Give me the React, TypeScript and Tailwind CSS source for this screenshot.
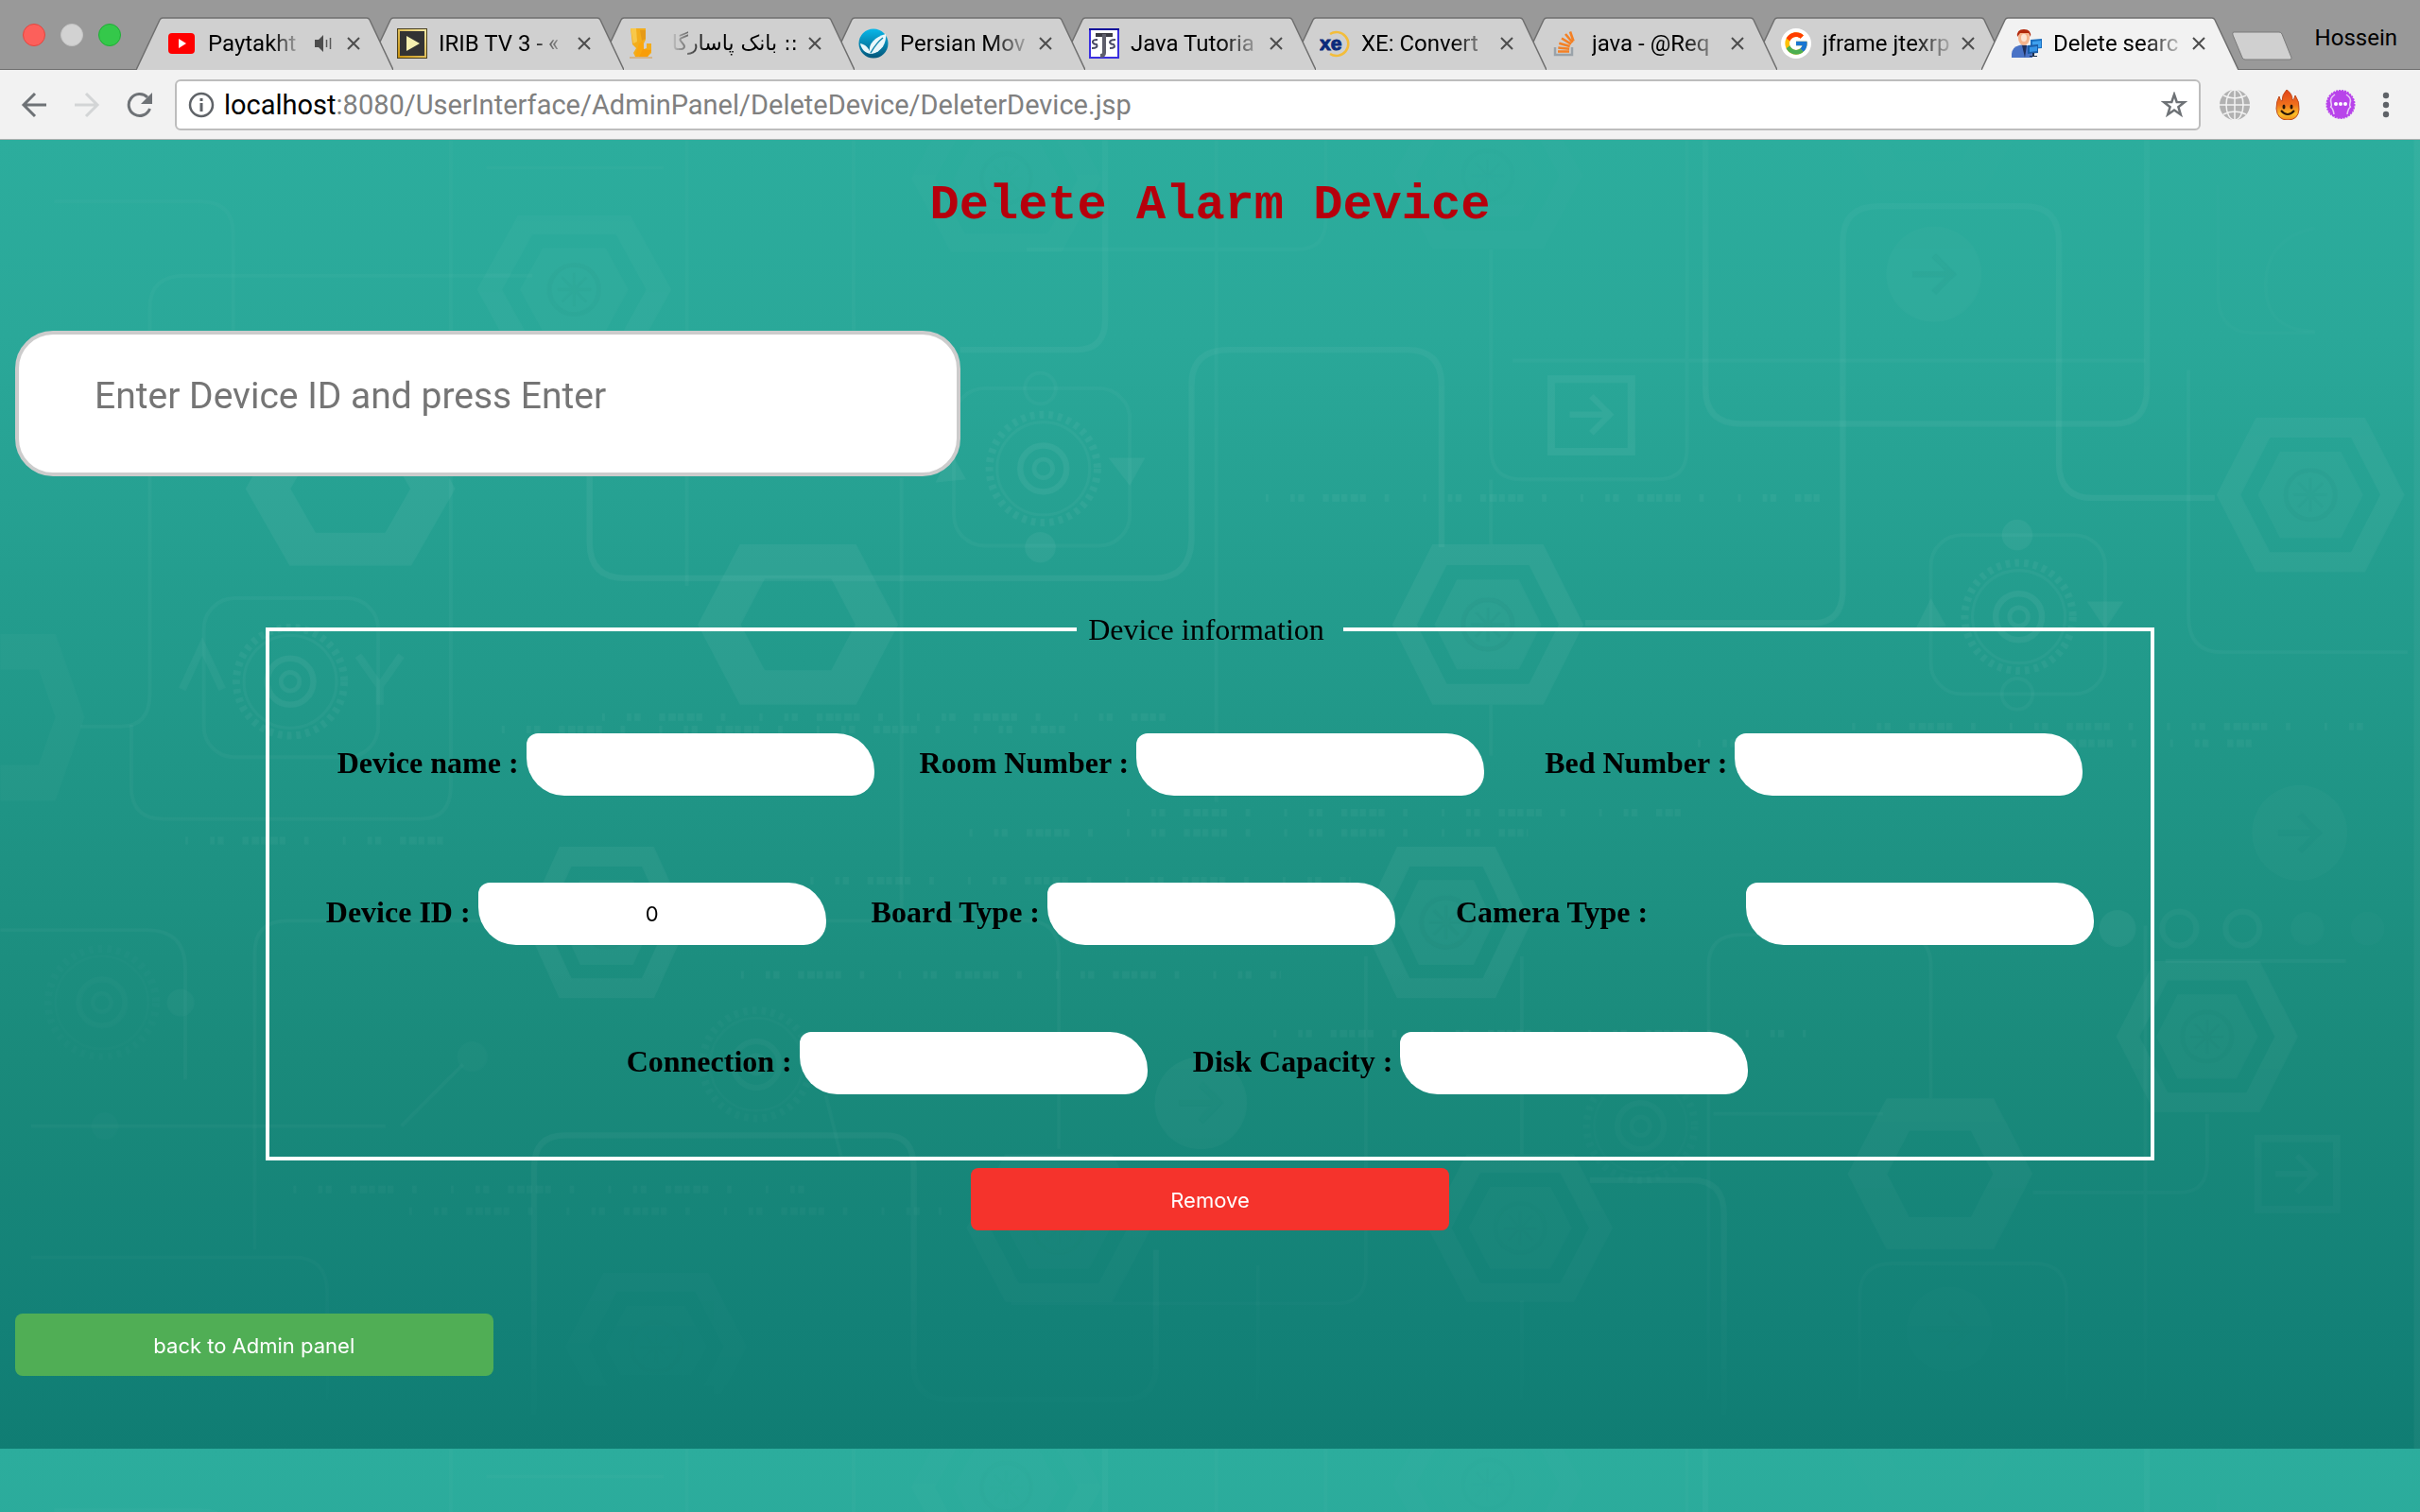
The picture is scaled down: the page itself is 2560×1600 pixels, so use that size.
import React from "react";
import { FcGoogle } from "react-icons/fc";

const ui = "font-[Roboto,'Liberation_Sans',sans-serif]";

/* ---------- Favicons ---------- */

const YouTubeIcon = () => (
  <svg viewBox="0 0 32 32" className="size-8">
    <rect x="2" y="5" width="28" height="22" rx="4" fill="#ff0000" />
    <path d="M13 11l8 5-8 5z" fill="#fff" />
  </svg>
);

const PlayIcon = () => (
  <svg viewBox="0 0 32 32" className="size-8">
    <defs>
      <linearGradient id="gold" x1="0" y1="1" x2="1" y2="0">
        <stop offset="0" stopColor="#c9920c" />
        <stop offset="1" stopColor="#f3e9a6" />
      </linearGradient>
    </defs>
    <rect x="0" y="0" width="32" height="32" fill="#4a4020" />
    <rect x="1" y="1" width="30" height="30" fill="url(#gold)" />
    <rect x="3" y="3" width="26" height="26" fill="#333" />
    <path d="M10 8l14 8-14 8z" fill="#f5efb0" />
  </svg>
);

const BankIcon = () => (
  <svg viewBox="0 0 32 32" className="size-8">
    <path d="M3 0h16v12l-2 4v6l3-1v-5l5 0v10l-4 4H8l-2-4 3-5-4-4z" fill="#f3ad1c" />
    <path d="M3 0h6l1 14-4 2z" fill="#f8c84a" />
    <path d="M12 16l4-3 1 9-6 8H8z" fill="#fba60c" />
    <path d="M16 22l9 1-4 7-9 0z" fill="#f99d07" />
    <path d="M2 30h24v2H2z" fill="#d3b58c" />
    <path d="M13 2h6v9l-4 2z" fill="#e59a18" />
  </svg>
);

const LeafIcon = () => (
  <svg viewBox="0 0 32 32" className="size-8">
    <defs>
      <linearGradient id="leafball" x1="0" y1="0" x2="0" y2="1">
        <stop offset="0" stopColor="#08b8ea" />
        <stop offset="1" stopColor="#04567a" />
      </linearGradient>
    </defs>
    <circle cx="16" cy="16" r="15.500" fill="url(#leafball)" />
    <path d="M12 26C10 16 18 9 29 6c1 9-4 19-15 21z" fill="#e9f7fb" />
    <path d="M2 16c5 1 9 4 11 11C7 26 3 22 2 16z" fill="#e9f7fb" />
    <path d="M13 26c4-7 8-12 13-16" stroke="#1487ad" strokeWidth="1.500" fill="none" />
  </svg>
);

const JavaTutorialIcon = () => (
  <svg viewBox="0 0 32 32" className="size-8">
    <rect x="1" y="1" width="30" height="30" fill="#fff" stroke="#3a2fe0" strokeWidth="2" />
    <path d="M0 1h32" stroke="#0a0a99" strokeWidth="2" />
    <path d="M7 5h18v4H7z" fill="#3b3b44" />
    <path d="M16 6v20q0 3-4 3" stroke="#5f5f6c" strokeWidth="4" fill="none" />
    <path d="M9 12q-6 0-5 3 1 2 4 2 2 4-5 4M28 12q-6 0-6 3 1 2 4 2 3 4-4 4" stroke="#4b4b66" strokeWidth="2" fill="none" />
  </svg>
);

const XeIcon = () => (
  <svg viewBox="0 0 32 32" className="size-8">
    <path d="M11 6a12.500 12.500 0 1 1 0 21" fill="none" stroke="#f3bd3a" strokeWidth="2.500" />
    <text x="0" y="23" fontFamily="Liberation Sans" fontWeight="700" fontSize="21" fill="#0b2a7a" stroke="#0b2a7a">
      xe
    </text>
  </svg>
);

const StackIcon = () => (
  <svg viewBox="0 0 32 32" className="size-8">
    <path d="M5 20v8h18v-8" fill="none" stroke="#9aa2a9" strokeWidth="2.500" />
    <path
      d="M8 24.500h12M8.300 20.500l11.800 1.200M9.300 15.800l11.400 3.200M12 10.500l10 6.200M16 6l7.500 9M21 3.500l3.500 10"
      stroke="#f48024"
      strokeWidth="2.600"
    />
  </svg>
);

const GoogleIcon = () => (
  <span className="flex size-8 items-center justify-center rounded-full bg-white">
    <FcGoogle className="size-7" />
  </span>
);

const PersonIcon = () => (
  <svg viewBox="0 0 32 32" className="size-8">
    <path d="M0 31q-1-11 8-13l5-1 6 2q3 2 3 12z" fill="#4a73c6" />
    <path d="M11 18h5l-2 13z" fill="#20305c" />
    <ellipse cx="13" cy="10" rx="6" ry="8" fill="#f6b48c" />
    <ellipse cx="13" cy="10" rx="3" ry="4" fill="#fde3d2" />
    <path d="M6 9q-1-8 7-8 8 0 7 8l-2-4H9z" fill="#b3290c" />
    <path d="M20 12l12-1v10l-12 1z" fill="#1b6fc0" />
    <path d="M22 14l9-1v7l-9 1z" fill="#3da0ee" />
    <path d="M17 18l11-1v9l-11 1z" fill="#1b5da8" />
    <path d="M19 20l8-1v5l-8 1z" fill="#3594e6" />
    <path d="M22 26v3h-3v1h8v-1h-3v-3z" fill="#1c2f4c" />
  </svg>
);

/* ---------- Browser chrome ---------- */

type TabData = {
  title: string;
  icon: React.ReactNode;
  rtl?: boolean;
  audio?: boolean;
  active?: boolean;
};

const tabs: TabData[] = [
  { title: "Paytakht", icon: <YouTubeIcon />, audio: true },
  { title: "IRIB TV 3 - «", icon: <PlayIcon /> },
  { title: ":: بانک پاسارگا", icon: <BankIcon />, rtl: true },
  { title: "Persian Mov", icon: <LeafIcon /> },
  { title: "Java Tutoria", icon: <JavaTutorialIcon /> },
  { title: "XE: Convert", icon: <XeIcon /> },
  { title: "java - @Req", icon: <StackIcon /> },
  { title: "jframe jtexrp", icon: <GoogleIcon /> },
  { title: "Delete searc", icon: <PersonIcon />, active: true },
];

function Tab({ tab, order }: { tab: TabData; order: number }) {
  return (
    <div className="relative -mr-7 h-14 w-[272px] min-w-0" style={{ zIndex: tab.active ? 20 : order }}>
      <svg viewBox="0 0 272 56" preserveAspectRatio="none" className="absolute inset-0 size-full" aria-hidden="true">
        <path d="M0 56L25 3Q26 1 28 1H244Q246 1 247 3L272 56z" fill={tab.active ? "#f2f2f2" : "#d0d0d0"} />
        <path d="M0 56L25 3Q26 1 28 1H244Q246 1 247 3L272 56" fill="none" stroke="#6f6f6f" strokeWidth="1.500" />
      </svg>
      <div className="relative flex h-full items-center pl-8 pr-[35px]">
        <span className="shrink-0">{tab.icon}</span>
        <span
          dir={tab.rtl ? "rtl" : "ltr"}
          className={
            "ml-3 min-w-0 flex-1 whitespace-nowrap text-2xl leading-9 text-black " +
            (tab.rtl
              ? "font-['DejaVu_Sans',sans-serif] text-[22px] [mask-image:linear-gradient(to_left,black_70%,transparent)]"
              : "[mask-image:linear-gradient(to_right,black_70%,transparent_105%)]")
          }
        >
          {tab.title}
        </span>
        {tab.audio && (
          <svg viewBox="0 0 20 20" className="ml-4 mr-1 size-5 shrink-0" aria-hidden="true">
            <path d="M1 6h4l5-5v18l-5-5H1z" fill="#4d4d4d" />
            <path d="M13.500 6v8M17.500 4v12" stroke="#5a5a5a" strokeWidth="1.500" />
          </svg>
        )}
        <button aria-label="Close tab" className="ml-[11px] shrink-0">
          <svg viewBox="0 0 14 14" className="size-3.5">
            <path d="M1 1l12 12M13 1L1 13" stroke="#4d4d4d" strokeWidth="2" />
          </svg>
        </button>
      </div>
    </div>
  );
}

function TabStrip() {
  return (
    <div className={"relative flex h-[74px] items-end bg-[#999] pl-6 shadow-[inset_0_-1px_0_#6f6f6f] " + ui}>
      <div className="flex h-full shrink-0 items-center gap-4">
        <button aria-label="Close" className="size-6 rounded-full border border-[#e2463f] bg-[#fc605b]" />
        <button aria-label="Minimize" className="size-6 rounded-full border border-[#c4c4c4] bg-[#d2d2d2]" />
        <button aria-label="Zoom" className="size-6 rounded-full border border-[#1fae36] bg-[#34c84a]" />
      </div>
      <div className="ml-4 flex min-w-0">
        {tabs.map((tab, i) => (
          <Tab key={tab.title} tab={tab} order={tabs.length - i} />
        ))}
      </div>
      <button aria-label="New tab" className="mb-[9px] ml-5 shrink-0">
        <svg viewBox="0 0 68 32" className="h-8 w-[68px]">
          <path d="M3 1h48q2 0 3 2l10 25q1 2-2 2H15q-2 0-3-2L2 4q-1-3 1-3z" fill="#d0d0d0" stroke="#7a7a7a" />
        </svg>
      </button>
      <span className="mb-4 ml-auto shrink-0 pr-6 text-2xl leading-9 text-black">Hossein</span>
    </div>
  );
}

function Toolbar() {
  return (
    <div className={"flex h-[74px] items-center border-b border-[#b0b0b0] bg-[#f2f2f2] pl-[22px] pr-8 " + ui}>
      <button aria-label="Back" className="mr-7 shrink-0">
        <svg viewBox="0 0 28 28" className="size-7" fill="none" stroke="#6e7276" strokeWidth="3">
          <path d="M27 14H4M15 2L3 14l12 12" />
        </svg>
      </button>
      <button aria-label="Forward" className="mr-7 shrink-0">
        <svg viewBox="0 0 28 28" className="size-7" fill="none" stroke="#d3d5d6" strokeWidth="3">
          <path d="M1 14h23M13 2l12 12-12 12" />
        </svg>
      </button>
      <button aria-label="Reload" className="mr-[23px] shrink-0">
        <svg viewBox="0 0 28 28" className="size-7">
          <path d="M24.500 18A11.500 11.500 0 1 1 22 6" fill="none" stroke="#6e7276" strokeWidth="3" />
          <path d="M27 1v12H15z" fill="#6e7276" />
        </svg>
      </button>
      <div className="flex h-[54px] min-w-0 flex-1 items-center rounded-md border-2 border-[#bdbdbd] bg-white px-3">
        <svg viewBox="0 0 28 28" className="size-7 shrink-0" aria-hidden="true">
          <circle cx="14" cy="14" r="12" fill="none" stroke="#5f6368" strokeWidth="2.500" />
          <path d="M14 12v9M14 7v3" stroke="#5f6368" strokeWidth="3" />
        </svg>
        <a href="#address" className="ml-2.5 min-w-0 flex-1 truncate text-[29px] leading-9 text-[#808080]">
          <span className="text-black">localhost</span>
          :8080/UserInterface/AdminPanel/DeleteDevice/DeleterDevice.jsp
        </a>
        <button aria-label="Bookmark this page" className="shrink-0">
          <svg viewBox="0 0 28 28" className="size-7">
            <path
              d="M14 3l2.700 7.900 8.300.2-6.600 5.100 2.400 8L14 19.500l-6.800 4.700 2.400-8L3 11.100l8.300-.2z"
              fill="none"
              stroke="#6e7276"
              strokeWidth="2.500"
            />
          </svg>
        </button>
      </div>
      <div className="ml-5 flex shrink-0 items-center gap-6">
        <button aria-label="Globe extension">
          <svg viewBox="0 0 32 32" className="size-8">
            <circle cx="16" cy="16" r="16" fill="#b1b1b1" />
            <g fill="none" stroke="#f2f2f2" strokeWidth="1.500">
              <path d="M16 0v32M0 16h32M4 6q12 6 24 0M4 26q12-6 24 0" />
              <ellipse cx="16" cy="16" rx="9" ry="16" />
            </g>
          </svg>
        </button>
        <button aria-label="Flame extension">
          <svg viewBox="0 0 32 32" className="size-8">
            <defs>
              <linearGradient id="flame" x1="0" y1="0" x2="0" y2="1">
                <stop offset="0" stopColor="#e2421a" />
                <stop offset="0.500" stopColor="#f0701c" />
                <stop offset="0.800" stopColor="#fbc02a" />
                <stop offset="1" stopColor="#f08a1c" />
              </linearGradient>
            </defs>
            <path d="M15 0q6 4 6 11 2 0 3-5 5 7 4 15-1 11-12 11T4 20Q4 12 7 7q1 5 3 5 0-7 5-12z" fill="url(#flame)" stroke="#c14a1c" />
            <ellipse cx="12" cy="18" rx="1.500" ry="2.500" fill="#2b1608" />
            <ellipse cx="20" cy="18" rx="1.500" ry="2.500" fill="#2b1608" />
            <path d="M9 22q7 8 14 0" fill="none" stroke="#2b1608" strokeWidth="2" />
          </svg>
        </button>
        <button aria-label="Chat extension">
          <svg viewBox="0 0 32 32" className="size-8">
            <circle cx="16" cy="15.500" r="14.500" fill="#b844ea" stroke="#b844ea" strokeWidth="2" strokeDasharray="2 1" />
            <path d="M10 5q-6 4-4 9 1 4-1 4 3 1 4 8M22 5q6 4 4 9-1 4 1 4-3 1-4 8" fill="none" stroke="#e9c7f8" strokeWidth="1.500" />
            <circle cx="11" cy="15" r="2" fill="#fff" />
            <circle cx="16" cy="15" r="2" fill="#fff" />
            <circle cx="21" cy="15" r="2" fill="#fff" />
          </svg>
        </button>
        <button aria-label="Menu" className="ml-1">
          <svg viewBox="0 0 8 28" className="h-7 w-2">
            <circle cx="4" cy="4" r="3.200" fill="#5f6368" />
            <circle cx="4" cy="14" r="3.200" fill="#5f6368" />
            <circle cx="4" cy="24" r="3.200" fill="#5f6368" />
          </svg>
        </button>
      </div>
    </div>
  );
}

/* ---------- Page background artwork ---------- */

function Hex({ x, y, w = 60, h = 50, core = true, o = 1 }: { x: number; y: number; w?: number; h?: number; core?: boolean; o?: number }) {
  const pts = (k: number) =>
    [[-1, 0], [-0.58, -1], [0.58, -1], [1, 0], [0.58, 1], [-0.58, 1]].map(([a, b]) => `${x + a * w * k},${y + b * h * k}`).join(" L");
  return (
    <g opacity={o}>
      <path d={`M${pts(1)}Z M${pts(core ? 0.74 : 0.57)}Z`} fillRule="evenodd" fill="#fff" fillOpacity="0.050" />
      {core && (
        <>
          <path d={`M${pts(0.56)}Z`} fill="#fff" fillOpacity="0.045" />
          <circle cx={x} cy={y} r="16" fill="none" stroke="#0c6f63" strokeOpacity="0.080" strokeWidth="3" />
          <path d={`M${x - 11} ${y}h22M${x} ${y - 11}v22M${x - 8} ${y - 8}l16 16M${x + 8} ${y - 8}l-16 16`} stroke="#0c6f63" strokeOpacity="0.060" strokeWidth="2" />
        </>
      )}
    </g>
  );
}

function Gear({ x, y, o = 1 }: { x: number; y: number; o?: number }) {
  return (
    <g fill="none" stroke="#fff" opacity={o}>
      <circle cx={x} cy={y} r="35" strokeOpacity="0.050" strokeWidth="5" strokeDasharray="3 3" />
      <circle cx={x} cy={y} r="30" strokeOpacity="0.040" strokeWidth="2" />
      <circle cx={x} cy={y} r="15" strokeOpacity="0.060" strokeWidth="4" />
      <circle cx={x} cy={y} r="6" strokeOpacity="0.060" strokeWidth="3" />
    </g>
  );
}

function Arrow({ x, y }: { x: number; y: number }) {
  return <path d={`M${x - 14} ${y}h24M${x} ${y - 12}l12 12-12 12`} fill="none" strokeWidth="4" />;
}

const codeLines = [
  [820, 323, 360], [390, 465, 365], [325, 473, 365], [1200, 471, 340], [1100, 482, 360], [730, 527, 360],
  [628, 540, 362], [120, 545, 170], [525, 571, 350], [480, 632, 350], [825, 670, 345], [190, 771, 340], [265, 785, 345],
];

function Circuit() {
  return (
    <g>
      <g fill="none" stroke="#fff" strokeOpacity="0.050" strokeWidth="4">
        <path d="M382 300V352Q382 375 405 375H748Q771 375 772 350V250Q772 227 796 227H912Q934 227 934 250V355" />
        <path d="M1105 91V252Q1105 275 1128 275H1370Q1391 275 1391 252V91" />
        <path d="M1027 404H1175Q1194 404 1194 382V157Q1194 134 1217 134H1312Q1334 134 1334 157V300Q1334 323 1356 323H1435" />
        <path d="M622 227H697Q716 227 716 208V91" />
        <path d="M346 920V757Q346 736 366 736H574Q592 736 592 757V885Q592 907 614 907H728Q749 907 749 885V810" />
        <path d="M1030 765H1096Q1117 765 1117 787V920" />
      </g>
      <g fill="none" stroke="#fff" strokeOpacity="0.035" strokeWidth="2.500">
        <path d="M35 131H130Q151 131 151 152V215" />
        <path d="M345 179H120Q97 179 97 200V450Q97 471 78 471H52" />
        <path d="M292 91V510Q292 531 272 531H106Q85 531 85 510V470M315 109H430M445 91V380M553 91V215M584 310V600" />
        <path d="M665 162H840Q859 162 859 143V91M788 91V520" />
        <path d="M966 162V291Q966 311 986 311H1074Q1093 311 1093 291V91M980 234H1390M966 311V353M966 457V490" />
        <path d="M165 810V618Q165 597 186 597H665Q686 597 686 618V745M1107 930V626Q1107 606 1128 606H1230Q1251 606 1251 626V712" />
        <path d="M885 620V825Q885 845 865 845H655M986 620V748M986 843V930M1110 722H1220" />
        <path d="M1317 773H1412Q1430 773 1430 754V722M1205 930V840Q1205 819 1226 819H1318Q1339 819 1339 840V930M1390 600V920" />
        <path d="M20 815H190Q212 815 212 838V930M1418 240V400Q1418 423 1440 423H1560M20 730H250M815 930V820M1403 623H1520" />
        <path d="M0 603H95Q120 603 120 628V700M535 710L545 750H700M260 730L300 690" />
        <path d="M1437 120V190Q1437 216 1460 216H1500" strokeOpacity="0.020" />
        <rect x="618" y="252" width="114" height="102" rx="20" />
        <rect x="1251" y="347" width="113" height="103" rx="20" />
        <rect x="132" y="388" width="113" height="103" rx="20" />
        <rect x="1463" y="738" width="51" height="46" strokeWidth="5" />
        <rect x="1005" y="246" width="52" height="47" strokeWidth="5" strokeOpacity="0.060" />
        <circle cx="674" cy="252" r="10" />
        <circle cx="1307" cy="450" r="10" />
        <circle cx="1412" cy="602" r="11" strokeWidth="4" />
        <circle cx="1453" cy="602" r="11" strokeWidth="4" />
        <path d="M1500 148Q1468 155 1468 185T1500 215" strokeOpacity="0.020" />
      </g>
      <g fill="#fff" fillOpacity="0.050">
        <circle cx="674" cy="355" r="10" />
        <circle cx="1307" cy="347" r="10" />
        <circle cx="1372" cy="602" r="12" />
        <circle cx="1495" cy="602" r="11" fillOpacity="0.025" />
        <circle cx="1534" cy="602" r="11" fillOpacity="0.020" />
        <circle cx="306" cy="685" r="10" fillOpacity="0.025" />
        <circle cx="68" cy="730" r="9" fillOpacity="0.020" />
        <circle cx="117" cy="650" r="9" fillOpacity="0.030" />
        <circle cx="1253" cy="178" r="31" fillOpacity="0.030" />
        <circle cx="778" cy="715" r="30" fillOpacity="0.040" />
        <circle cx="1490" cy="540" r="31" fillOpacity="0.025" />
        <circle cx="1263" cy="862" r="28" fillOpacity="0.025" />
        <path d="M718 297h24l-10 18zM606 313l10-20 10 18zM1241 408l10-20 10 18zM1352 390h24l-12 18z" />
      </g>
      <g fill="none" stroke="#fff" strokeOpacity="0.045" strokeWidth="5">
        <path d="M118 447l13-28 13 28M232 425l14 20 14-20M246 445v12" />
      </g>
      <g stroke="#fff" strokeOpacity="0.060">
        <Arrow x={1031} y={269} />
      </g>
      <g stroke="#0c7a6c" strokeOpacity="0.090">
        <Arrow x={1253} y={178} />
        <Arrow x={778} y={715} />
        <Arrow x={1490} y={540} />
        <Arrow x={1263} y={862} />
      </g>
      <g stroke="#fff" strokeOpacity="0.030">
        <Arrow x={1488} y={761} />
      </g>
      {codeLines.map(([x, y, w]) => (
        <path key={`${x}-${y}`} d={`M${x} ${y}h${w}`} stroke="#fff" strokeOpacity="0.045" strokeWidth="5" strokeDasharray="2 14 3 2 4 12 4 2 5 1 4 2 5 1 4 12 3 22" />
      ))}
      <Gear x={676} y={304} />
      <Gear x={1308} y={400} />
      <Gear x={188} y={442} />
      <Gear x={66} y={650} o={0.4} />
      <Gear x={490} y={690} o={0.6} />
      <Gear x={1063} y={730} o={0.5} />
      <Hex x={372} y={188} w={63} h={48} o={0.8} />
      <Hex x={652} y={116} w={62} h={48} o={0.5} />
      <Hex x={964} y={114} w={62} h={48} o={0.4} />
      <Hex x={227} y={317} w={68} h={50} core={false} />
      <Hex x={517} y={405} w={65} h={52} core={false} />
      <Hex x={964} y={405} w={62} h={52} />
      <Hex x={1250} y={78} w={62} h={46} core={false} o={0.3} />
      <Hex x={1497} y={321} w={61} h={50} o={0.9} />
      <Hex x={393} y={598} w={53} h={49} />
      <Hex x={937} y={598} w={55} h={49} />
      <Hex x={10} y={465} w={45} h={54} core={false} o={0.5} />
      <Hex x={1430} y={672} w={59} h={49} o={0.8} />
      <Hex x={1257} y={761} w={60} h={49} core={false} o={0.9} />
      <Hex x={985} y={796} w={60} h={48} o={0.8} />
      <Hex x={686} y={796} w={60} h={48} o={0.7} />
      <Hex x={425} y={873} w={59} h={48} o={0.6} />
    </g>
  );
}

function Backdrop() {
  return (
    <svg viewBox="0 91 1568 889" preserveAspectRatio="none" className="absolute inset-0 size-full" aria-hidden="true">
      <defs>
        <linearGradient id="page" x1="0" y1="0" x2="0" y2="1">
          <stop offset="0" stopColor="#2cad9d" />
          <stop offset="0.150" stopColor="#2aa899" />
          <stop offset="0.360" stopColor="#239c8d" />
          <stop offset="0.700" stopColor="#1a8a7b" />
          <stop offset="0.900" stopColor="#138177" />
          <stop offset="1" stopColor="#107d73" />
        </linearGradient>
        <linearGradient id="fade" x1="0" y1="0" x2="0" y2="1">
          <stop offset="0" stopColor="#888" />
          <stop offset="0.250" stopColor="#fff" />
          <stop offset="0.700" stopColor="#ddd" />
          <stop offset="0.880" stopColor="#888" />
          <stop offset="1" stopColor="#000" />
        </linearGradient>
        <mask id="tile" maskUnits="userSpaceOnUse" x="0" y="91" width="1564" height="848">
          <rect x="0" y="91" width="1564" height="848" fill="url(#fade)" />
        </mask>
      </defs>
      <rect x="0" y="91" width="1568" height="849" fill="url(#page)" />
      <rect x="0" y="939" width="1568" height="848" fill="url(#page)" />
      <g id="circuit" mask="url(#tile)">
        <Circuit />
      </g>
      <use href="#circuit" y="848" />
      <rect x="1564" y="91" width="4" height="848" fill="#fff" fillOpacity="0.040" />
    </svg>
  );
}

/* ---------- Form ---------- */

function Field({ id, label, value = "", wide = false }: { id: string; label: string; value?: string; wide?: boolean }) {
  return (
    <div className="flex items-center">
      <label htmlFor={id} className={"whitespace-nowrap pb-1 text-[32px] font-bold leading-9 text-black " + (wide ? "mr-[104px]" : "mr-2")}>
        {label}
      </label>
      <input
        id={id}
        defaultValue={value}
        className="h-[66px] w-[368px] rounded-bl-[40px] rounded-br-[24px] rounded-tl-[12px] rounded-tr-[40px] bg-white text-center font-[Inter,sans-serif] text-[22px] text-black outline-none"
      />
    </div>
  );
}

export default function App() {
  return (
    <div className="flex min-h-screen flex-col">
      <header>
        <TabStrip />
        <Toolbar />
      </header>
      <main className="relative flex-1 bg-[#2cad9d] px-4 pb-36 font-['Liberation_Serif',serif]">
        <Backdrop />
        <div className="relative">
          <h1 className="pt-10 text-center font-['Liberation_Mono',monospace] text-[52px] font-bold leading-[60px] text-[#b6000c]">
            Delete Alarm Device
          </h1>
          <input
            type="text"
            aria-label="Device ID"
            placeholder="Enter Device ID and press Enter"
            className="mt-[102px] block h-[154px] w-[1000px] rounded-[40px] border-4 border-[#ccc] bg-white pb-4 pl-20 pr-10 font-[Roboto,sans-serif] text-[39px] text-black outline-none placeholder:text-[#757575]"
          />
          <form onSubmit={(e) => e.preventDefault()}>
            <fieldset className="mx-auto mt-36 w-[79%] border-4 border-white pb-[66px]">
              <legend className="mx-auto pl-3 pr-5 text-[32px] leading-9 text-black">Device information</legend>
              <div className="flex flex-col gap-[92px] pt-[92px]">
                <div className="flex justify-center">
                  <Field id="device-name" label="Device name :" />
                  <div className="ml-12 mr-16">
                    <Field id="room-number" label="Room Number :" />
                  </div>
                  <Field id="bed-number" label="Bed Number :" />
                </div>
                <div className="flex justify-center">
                  <Field id="device-id" label="Device ID :" value="0" />
                  <div className="ml-12 mr-16">
                    <Field id="board-type" label="Board Type :" />
                  </div>
                  <Field id="camera-type" label="Camera Type :" wide />
                </div>
                <div className="flex justify-center gap-12 pr-12">
                  <Field id="connection" label="Connection :" />
                  <Field id="disk-capacity" label="Disk Capacity :" />
                </div>
              </div>
            </fieldset>
            <button type="submit" className="mx-auto mt-2 block h-[66px] w-1/5 rounded-lg bg-[#f5332c] pt-0.5 font-[Inter,sans-serif] text-[22px] text-white">
              Remove
            </button>
          </form>
          <button type="button" className="mt-[88px] block h-[66px] w-1/5 rounded-lg bg-[#50ae55] pt-0.5 font-[Inter,sans-serif] text-[22px] text-white">
            back to Admin panel
          </button>
        </div>
      </main>
    </div>
  );
}
